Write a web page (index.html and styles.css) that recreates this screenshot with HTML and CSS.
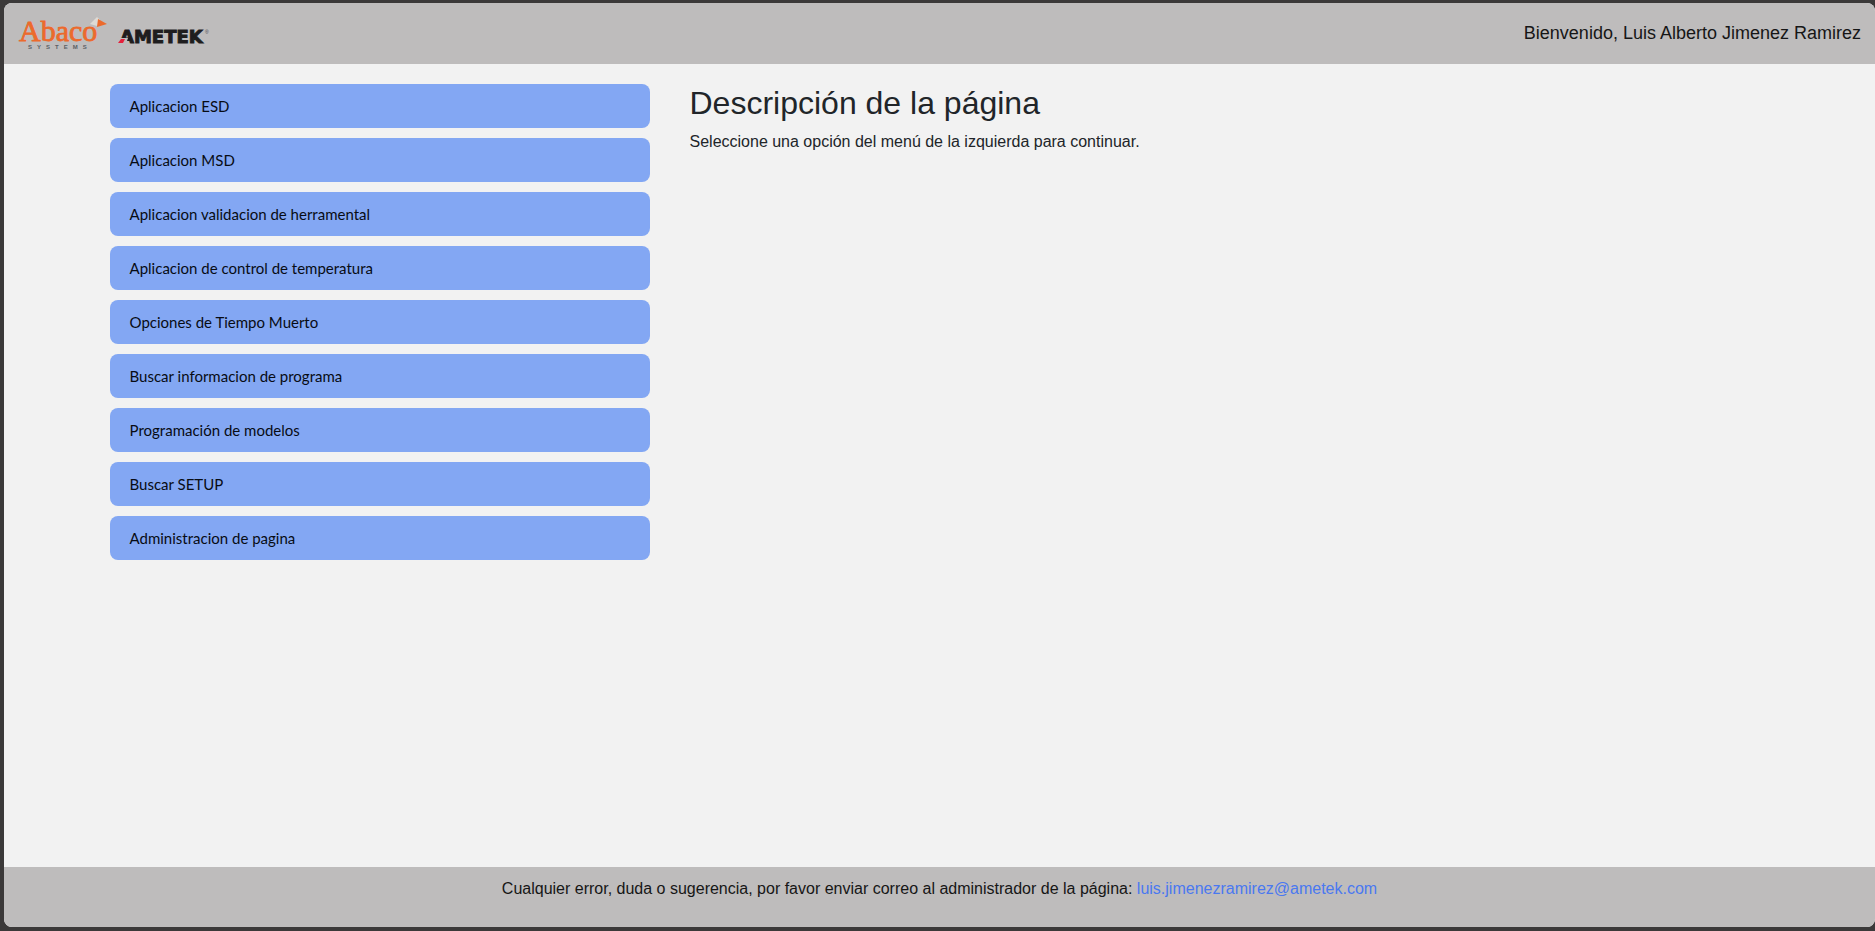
FILE: index.html
```html
<!DOCTYPE html>
<html lang="es">
<head>
<meta charset="utf-8">
<title>Menú principal</title>
<link rel="stylesheet" href="styles.css">
</head>
<body>
<div class="page">
  <header class="header">
    <div class="logos">
      <svg class="logo-abaco" viewBox="0 0 92 36" role="img" aria-label="Abaco Systems">
        <text class="abaco-name" x="1" y="26">Abaco</text>
        <text class="abaco-sub" x="10" y="34">SYSTEMS</text>
        <path fill="#dedad4" d="M72 9 79 2 82 5 79 11Z"/>
        <path fill="#ec6a2c" d="M80 4 89 9 79 12Z"/>
      </svg>
      <svg class="logo-ametek" viewBox="0 0 96 28" role="img" aria-label="Ametek">
        <text class="ametek-name" x="2" y="24">AMETEK</text>
        <path class="logo-gap" d="M0 25V19H10L8 25Z"/>
        <path fill="#e4203c" d="M3 20H7L5 24H0Z"/>
        <text class="ametek-mark" x="87" y="15">®</text>
      </svg>
    </div>
    <p class="welcome">Bienvenido, Luis Alberto Jimenez Ramirez</p>
  </header>
  <main class="content">
    <nav class="menu">
      <button class="menu-item" type="button">Aplicacion ESD</button>
      <button class="menu-item" type="button">Aplicacion MSD</button>
      <button class="menu-item" type="button">Aplicacion validacion de herramental</button>
      <button class="menu-item" type="button">Aplicacion de control de temperatura</button>
      <button class="menu-item" type="button">Opciones de Tiempo Muerto</button>
      <button class="menu-item" type="button">Buscar informacion de programa</button>
      <button class="menu-item" type="button">Programación de modelos</button>
      <button class="menu-item" type="button">Buscar SETUP</button>
      <button class="menu-item" type="button">Administracion de pagina</button>
    </nav>
    <section class="description">
      <h1 class="title">Descripción de la página</h1>
      <p class="text">Seleccione una opción del menú de la izquierda para continuar.</p>
    </section>
  </main>
  <footer class="footer">
    <p class="text">Cualquier error, duda o sugerencia, por favor enviar correo al administrador de la página: <a class="mail" href="mailto:luis.jimenezramirez@ametek.com">luis.jimenezramirez@ametek.com</a></p>
  </footer>
</div>
</body>
</html>
```
FILE: styles.css
```css
* {
  box-sizing: border-box;
}

body {
  margin: 0;
  min-height: 100vh;
  display: flex;
  padding: 3px 0 4px 4px;
  background: #3b3939;
  color: #212529;
  font-family: Arial, "Liberation Sans", sans-serif;
  font-size: 16px;
  line-height: 24px;
}

.page {
  flex: 1;
  display: flex;
  flex-direction: column;
  overflow: hidden;
  border-radius: 8px;
  background: #f2f2f2;
}

.header {
  display: flex;
  justify-content: space-between;
  align-items: center;
  padding: 12px 14px 13px;
  background: #bebcbc;
}

.logos {
  display: flex;
  align-items: center;
  gap: 8px;
}

.logo-abaco {
  width: 92px;
  height: 36px;
}

.abaco-name {
  fill: #ec6a2c;
  stroke: #ec6a2c;
  stroke-width: 0.8px;
  font-family: "Liberation Serif", serif;
  font-size: 30px;
}

.abaco-sub {
  fill: #5c6064;
  font-family: "Liberation Sans", sans-serif;
  font-size: 6px;
  font-weight: 700;
  letter-spacing: 5px;
}

.logo-ametek {
  width: 96px;
  height: 28px;
}

.ametek-name {
  fill: #1f1d1e;
  stroke: #1f1d1e;
  stroke-width: 1px;
  font-family: "DejaVu Sans", sans-serif;
  font-size: 18px;
  font-weight: 700;
}

.ametek-mark {
  fill: #4c4a4b;
  font-family: "Liberation Sans", sans-serif;
  font-size: 5px;
}

.logo-gap {
  fill: #bebcbc;
}

.welcome {
  margin: 0;
  color: #161616;
  font-size: 18px;
}

.content {
  flex: 1;
  display: grid;
  grid-template-columns: 1fr 2fr;
  align-items: start;
  gap: 40px;
  width: 90%;
  margin: 0 auto;
  padding: 20px 12px;
}

.menu {
  display: flex;
  flex-direction: column;
  gap: 10px;
}

.menu-item {
  padding: 10px 20px;
  border: 0;
  border-radius: 8px;
  background: #83a7f3;
  color: #080c14;
  font-family: "Gill Sans", "Gill Sans MT", Lato, sans-serif;
  font-size: 15px;
  line-height: 24px;
  text-align: left;
  cursor: pointer;
}

.title {
  margin: 0 0 8px;
  font-size: 32px;
  font-weight: 400;
  line-height: 38px;
}

.text {
  margin: 0;
}

.footer {
  padding: 10px 0 26px;
  background: #bebcbc;
  color: #161616;
  text-align: center;
}

.mail {
  color: #4a78f0;
  text-decoration: none;
}
```
